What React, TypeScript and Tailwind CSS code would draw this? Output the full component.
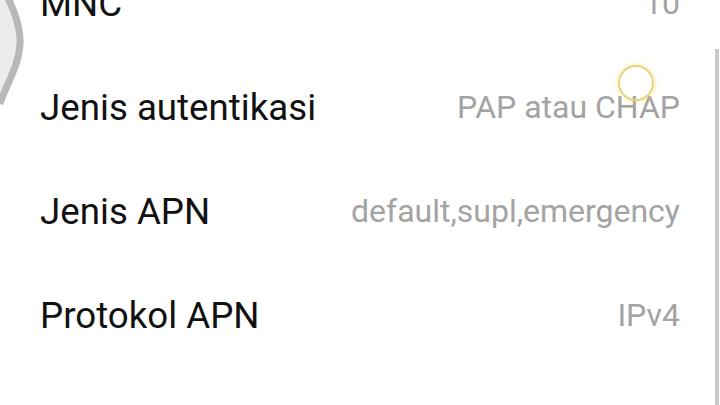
import React from "react";

const rows = [
  { label: "MNC", value: "10" },
  { label: "Jenis autentikasi", value: "PAP atau CHAP" },
  { label: "Jenis APN", value: "default,supl,emergency" },
  { label: "Protokol APN", value: "IPv4" },
];

export default function App() {
  return (
    <div
      className="relative w-[720px] h-[405px] overflow-hidden bg-white"
      style={{ fontFamily: "Roboto, 'Noto Sans', sans-serif" }}
    >
      <div className="mt-[-48px] flex flex-col">
        {rows.map((r) => (
          <div key={r.label} className="h-[104px] flex items-center justify-between pl-[40px] pr-[40px]">
            <span className="text-[36.7px] leading-none text-[#111111]">{r.label}</span>
            <span className="text-[32px] leading-none text-[#a3a3a3] mt-[-2px]">{r.value}</span>
          </div>
        ))}
      </div>

      {/* scrollbar */}
      <div className="absolute left-[715px] top-[49px] w-[4px] h-[360px] bg-[#c8c8c8]" />

      {/* left edge overlay shape */}
      <svg className="absolute left-0 top-0" width="40" height="120" viewBox="0 0 40 120">
        <path
          d="M0 -4 L7 -4 C 14 10, 21 28, 20 44 C 19 64, 9 80, 2 98 L 0 104 Z"
          fill="#ececec"
        />
        <path
          d="M7 -4 C 14 10, 21 28, 20 44 C 19 64, 9 80, 2 98 L 0 104"
          fill="none"
          stroke="#b8b8b8"
          strokeWidth="7"
        />
      </svg>

      {/* touch indicator */}
      <div className="absolute left-[618px] top-[65px] w-[36px] h-[36px] rounded-full border-2 border-[#ecd27a] shadow-[0_0_6px_rgba(250,220,120,0.6)]" />
    </div>
  );
}
